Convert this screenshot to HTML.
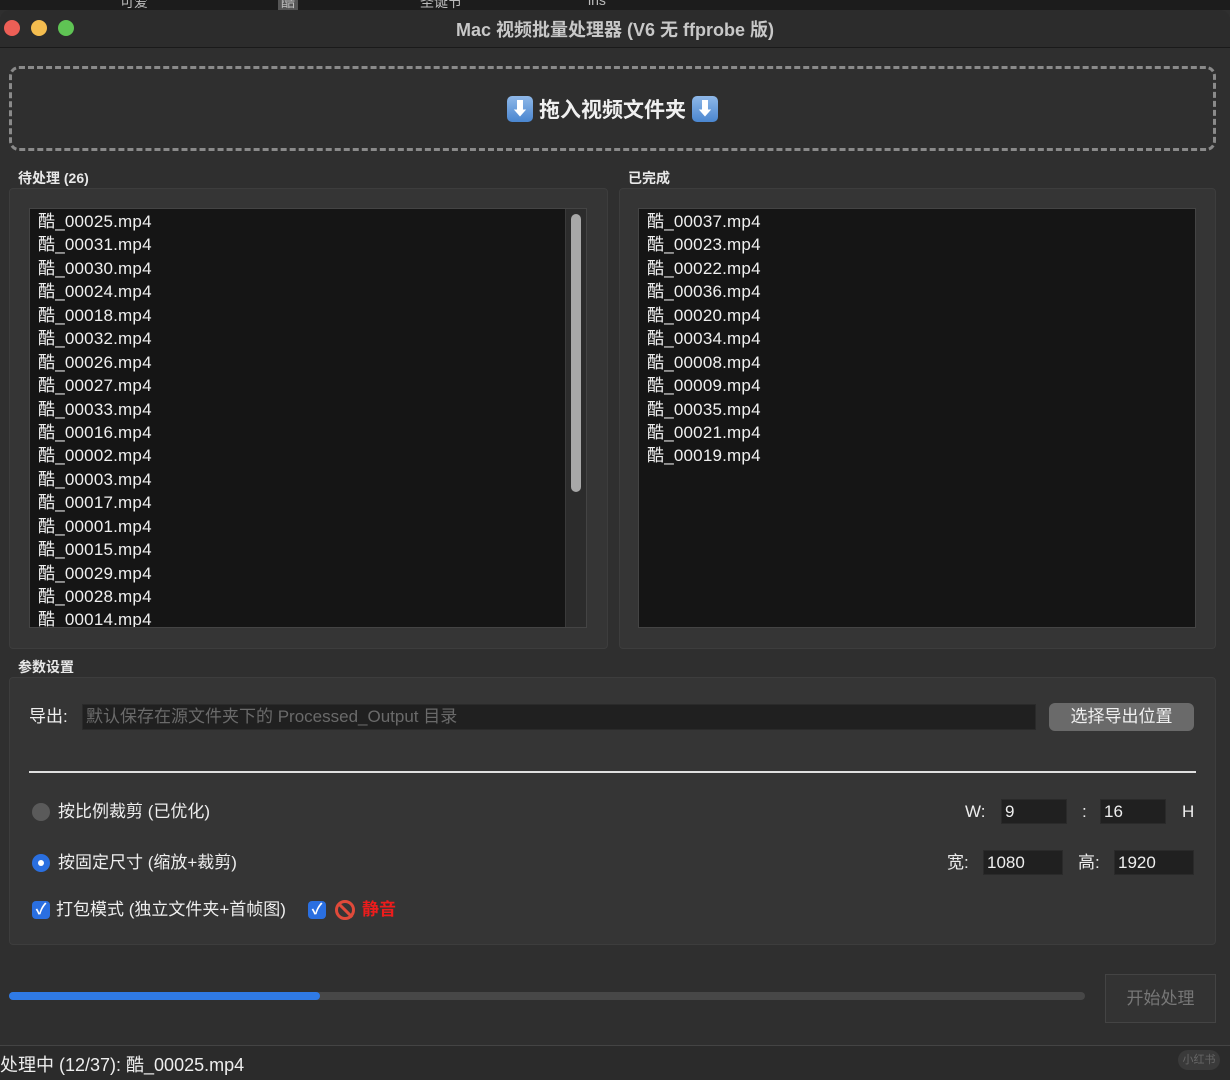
<!DOCTYPE html>
<html><head><meta charset="utf-8"><style>
*{margin:0;padding:0;box-sizing:border-box}
body{width:1230px;height:1080px;overflow:hidden;background:#2f2f2f;font-family:"Liberation Sans","Noto Sans CJK SC",sans-serif;color:#e8e8e8;position:relative}
.abs{position:absolute}
.top{left:0;top:0;width:1230px;height:10px;background:#1c1c1c;overflow:hidden;font-size:14px;color:#bbb}
.title{left:0;top:10px;width:1230px;height:38px;background:#2c2c2c;border-bottom:1px solid #1a1a1a;border-top-left-radius:10px;border-top-right-radius:10px}
.dot{width:16px;height:16px;border-radius:50%;top:10px}
.drop{left:9px;top:66px;width:1207px;height:85px;border:3px dashed #8a8a8a;border-radius:10px;display:flex;align-items:center;justify-content:center;font-size:21px;color:#f0f0f0;font-weight:bold}
.arr{display:inline-block;width:26px;height:26px;background:linear-gradient(#8fb8e8,#4a86d0);border-radius:5px;color:#fff;font-size:18px;line-height:26px;text-align:center;font-weight:bold;margin:0 6px}
.lbl{font-size:14px;font-weight:bold;color:#e8e8e8}
.grp{border:1px solid #3d3d3d;background:#353535;border-radius:4px}
.list{background:#151515;border:1px solid #444;overflow:hidden}
.list div{font-size:17px;height:23.45px;line-height:23.45px;padding-left:8px;color:#f0f0f0;white-space:nowrap;letter-spacing:0.2px}
.inp{background:#202020;border:1px solid #2a2a2a;font-size:17px;color:#eee;padding-left:3px;line-height:24px}
.t{font-size:17px;color:#eee;line-height:20px}
</style></head><body>
<div class="abs top"><span class="abs" style="left:120px;top:-8px">可爱</span><span class="abs" style="left:278px;top:-8px;background:#555;padding:0 3px">酷</span><span class="abs" style="left:420px;top:-8px">圣诞节</span><span class="abs" style="left:588px;top:-8px">ins</span></div>
<div class="abs title">
<div class="abs dot" style="left:4px;background:#ed5f56"></div>
<div class="abs dot" style="left:31px;background:#f4bd4f"></div>
<div class="abs dot" style="left:58px;background:#5fc454"></div>
<div class="abs" style="left:0;width:1230px;top:6px;text-align:center;font-size:18px;font-weight:bold;color:#c8c8c8">Mac 视频批量处理器 (V6 无 ffprobe 版)</div>
</div>
<div class="abs drop"><span class="arr">⬇</span>拖入视频文件夹<span class="arr">⬇</span></div>

<div class="abs lbl" style="left:18px;top:168px">待处理 (26)</div>
<div class="abs lbl" style="left:628px;top:168px">已完成</div>
<div class="abs grp" style="left:9px;top:188px;width:599px;height:461px"></div>
<div class="abs grp" style="left:619px;top:188px;width:597px;height:461px"></div>
<div class="abs list" style="left:29px;top:208px;width:558px;height:420px;padding-top:1px">
<div>酷_00025.mp4</div><div>酷_00031.mp4</div><div>酷_00030.mp4</div><div>酷_00024.mp4</div><div>酷_00018.mp4</div><div>酷_00032.mp4</div><div>酷_00026.mp4</div><div>酷_00027.mp4</div><div>酷_00033.mp4</div><div>酷_00016.mp4</div><div>酷_00002.mp4</div><div>酷_00003.mp4</div><div>酷_00017.mp4</div><div>酷_00001.mp4</div><div>酷_00015.mp4</div><div>酷_00029.mp4</div><div>酷_00028.mp4</div><div>酷_00014.mp4</div>
</div>
<div class="abs" style="left:565px;top:209px;width:21px;height:418px;background:#2c2c2c;border-left:1px solid #3a3a3a"></div>
<div class="abs" style="left:571px;top:214px;width:10px;height:278px;background:#a8a8a8;border-radius:5px"></div>
<div class="abs list" style="left:638px;top:208px;width:558px;height:420px;padding-top:1px">
<div>酷_00037.mp4</div><div>酷_00023.mp4</div><div>酷_00022.mp4</div><div>酷_00036.mp4</div><div>酷_00020.mp4</div><div>酷_00034.mp4</div><div>酷_00008.mp4</div><div>酷_00009.mp4</div><div>酷_00035.mp4</div><div>酷_00021.mp4</div><div>酷_00019.mp4</div>
</div>

<div class="abs lbl" style="left:18px;top:657px">参数设置</div>
<div class="abs grp" style="left:9px;top:677px;width:1207px;height:268px"></div>
<div class="abs t" style="left:29px;top:707px">导出:</div>
<div class="abs inp" style="left:82px;top:704px;width:954px;height:26px;color:#6a6a6a">默认保存在源文件夹下的 Processed_Output 目录</div>
<div class="abs" style="left:1049px;top:703px;width:145px;height:28px;background:#6a6a6a;border-radius:6px;text-align:center;font-size:17px;line-height:28px;color:#f0f0f0">选择导出位置</div>
<div class="abs" style="left:29px;top:771px;width:1167px;height:2px;background:#e0e0e0"></div>

<div class="abs" style="left:32px;top:803px;width:18px;height:18px;border-radius:50%;background:#5a5a5a"></div>
<div class="abs t" style="left:58px;top:802px">按比例裁剪 (已优化)</div>
<div class="abs" style="left:32px;top:854px;width:18px;height:18px;border-radius:50%;background:#2a6fe0"><div style="margin:6px;width:6px;height:6px;border-radius:50%;background:#fff"></div></div>
<div class="abs t" style="left:58px;top:853px">按固定尺寸 (缩放+裁剪)</div>
<div class="abs" style="left:32px;top:901px;width:18px;height:18px;border-radius:4px;background:#2a6fe0;color:#fff;font-size:15px;line-height:18px;text-align:center;font-weight:bold">✓</div>
<div class="abs t" style="left:56px;top:900px">打包模式 (独立文件夹+首帧图)</div>
<div class="abs" style="left:308px;top:901px;width:18px;height:18px;border-radius:4px;background:#2a6fe0;color:#fff;font-size:15px;line-height:18px;text-align:center;font-weight:bold">✓</div>
<div class="abs" style="left:335px;top:900px;width:20px;height:20px;border-radius:50%;border:3px solid #e04a3a"><div style="position:absolute;left:6px;top:-2px;width:3px;height:19px;background:#e04a3a;transform:rotate(-45deg)"></div></div>
<div class="abs t" style="left:362px;top:900px;color:#ee1c1c;font-weight:bold">静音</div>

<div class="abs t" style="left:965px;top:802px">W:</div>
<div class="abs inp" style="left:1001px;top:799px;width:66px;height:25px">9</div>
<div class="abs t" style="left:1082px;top:802px">:</div>
<div class="abs inp" style="left:1100px;top:799px;width:66px;height:25px">16</div>
<div class="abs t" style="left:1182px;top:802px">H</div>
<div class="abs t" style="left:947px;top:853px">宽:</div>
<div class="abs inp" style="left:983px;top:850px;width:80px;height:25px">1080</div>
<div class="abs t" style="left:1078px;top:853px">高:</div>
<div class="abs inp" style="left:1114px;top:850px;width:80px;height:25px">1920</div>

<div class="abs" style="left:9px;top:992px;width:1076px;height:8px;background:#474747;border-radius:4px"></div>
<div class="abs" style="left:9px;top:992px;width:311px;height:8px;background:#2f7ae5;border-radius:4px"></div>
<div class="abs" style="left:1105px;top:974px;width:111px;height:49px;border:1px solid #444;background:#333;text-align:center;line-height:47px;font-size:17px;color:#777">开始处理</div>

<div class="abs" style="left:0;top:1045px;width:1230px;height:1px;background:#444"></div>
<div class="abs" style="left:0;top:1046px;width:1230px;height:34px;background:#2b2b2b"></div>
<div class="abs t" style="left:0;top:1055px;font-size:18px">处理中 (12/37): 酷_00025.mp4</div>
<div class="abs" style="left:1178px;top:1050px;width:42px;height:20px;border-radius:10px;background:#3a3a3a;font-size:11px;color:#666;text-align:center;line-height:20px">小红书</div>
</body></html>
